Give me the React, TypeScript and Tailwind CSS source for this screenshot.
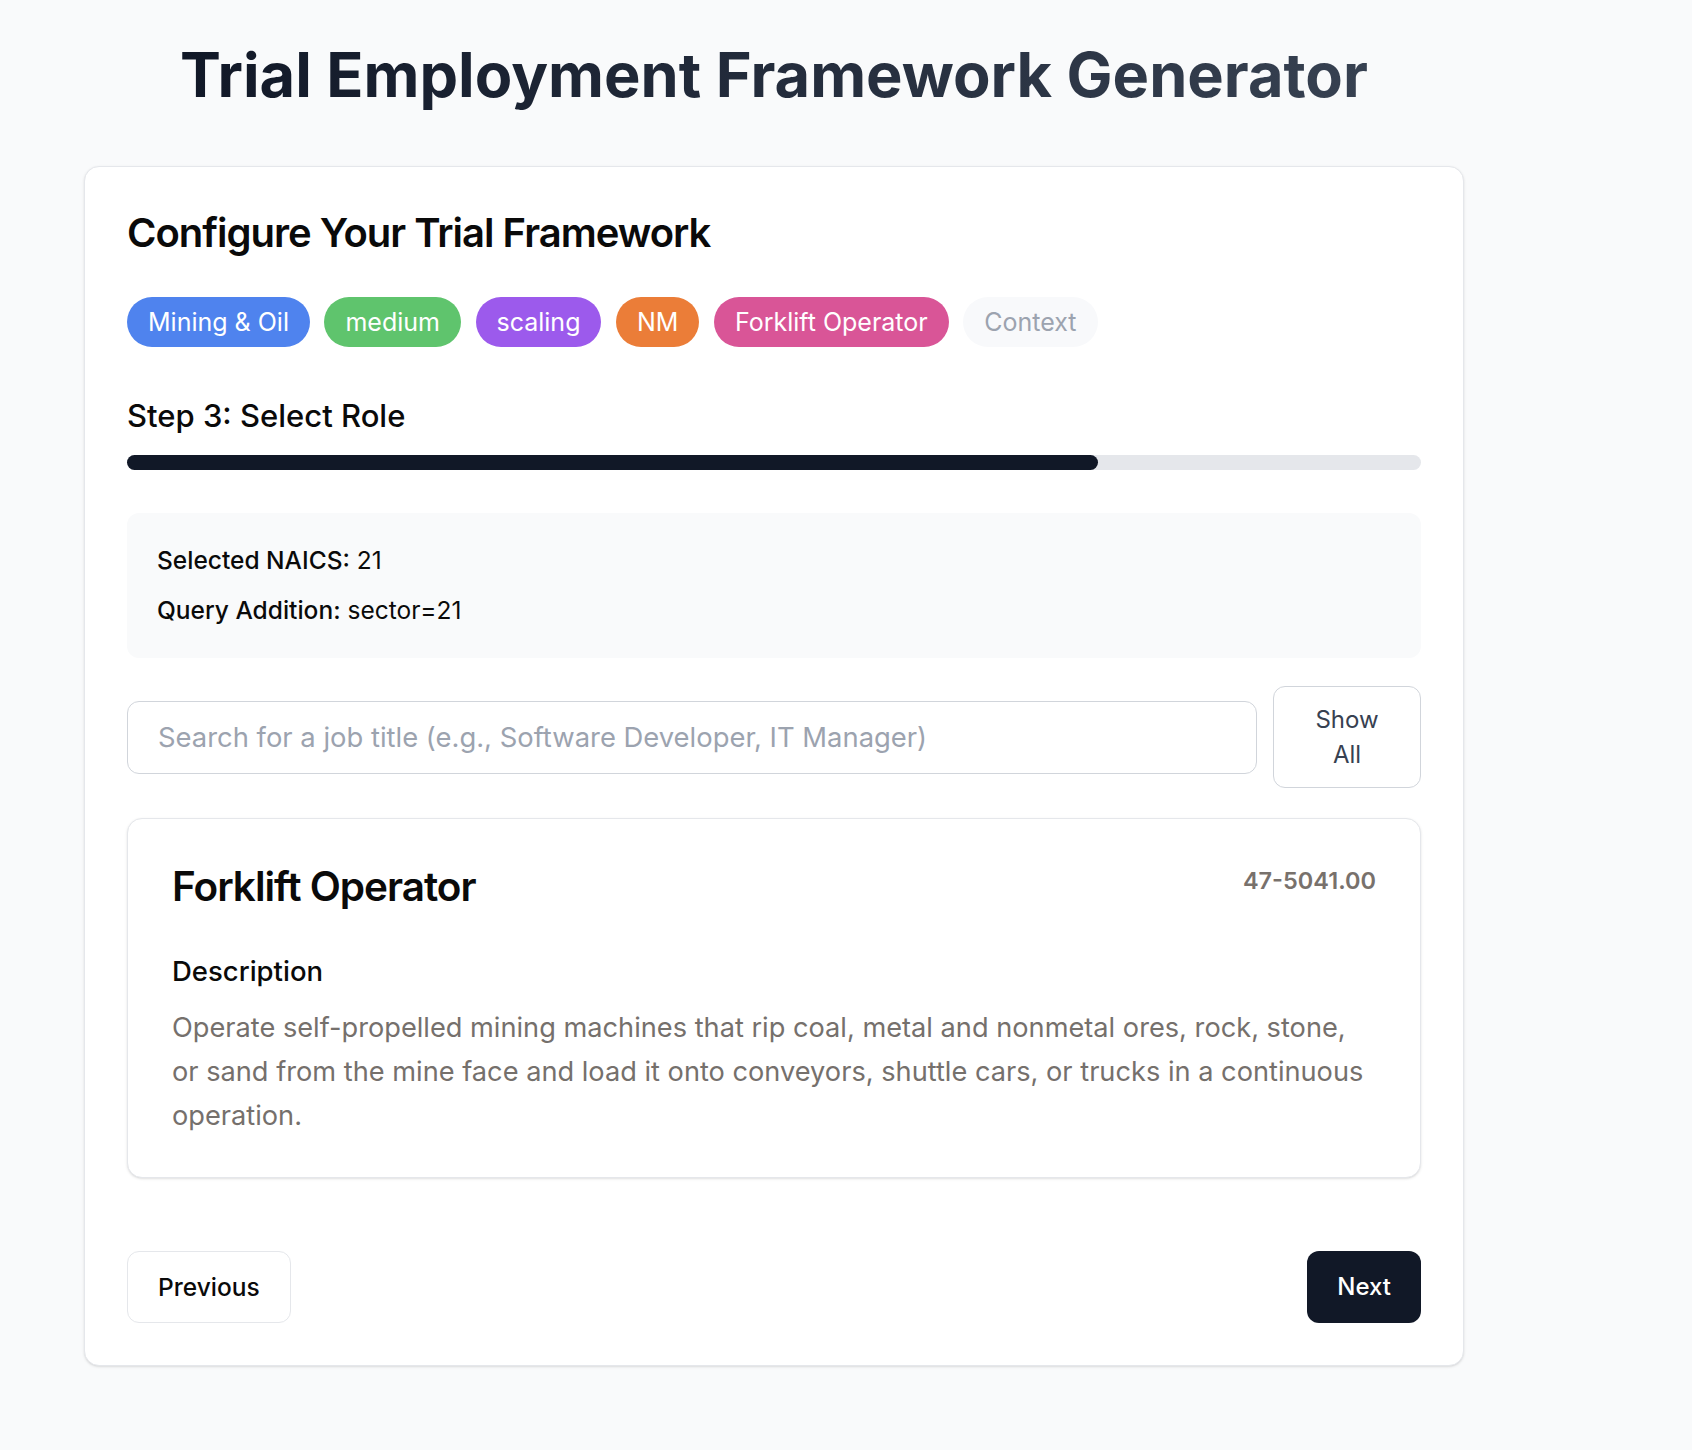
import React from "react";

const CHIPS = [
  { label: "Mining & Oil", cls: "bg-[#4f83ee] text-white" },
  { label: "medium", cls: "bg-[#5fc46d] text-white" },
  { label: "scaling", cls: "bg-[#9c5aec] text-white" },
  { label: "NM", cls: "bg-[#eb7d38] text-white" },
  { label: "Forklift Operator", cls: "bg-[#d95597] text-white" },
  { label: "Context", cls: "bg-[#f8f9fb] text-[#9ca3af]" },
];

export default function App() {
  return (
    <div className="min-h-screen bg-[#f9fafb] font-[Inter,sans-serif] text-[#0a0a0a]">
      <div className="ml-[84px] w-[1380px] pt-[39px] pb-[84px]">
        <h1 className="text-center text-[61.3px] font-bold leading-[72px]">
          <span className="bg-linear-to-r from-[#111827] to-[#374151] bg-clip-text text-transparent">
            Trial Employment Framework Generator
          </span>
        </h1>

        <div className="mt-[55px] rounded-[15px] border border-[#e5e7eb] bg-white p-[42px] shadow-sm">
          <h2 className="text-[40px] font-semibold leading-[48px] tracking-tight">
            Configure Your Trial Framework
          </h2>

          <div className="mt-[40px] flex gap-[14.5px]">
            {CHIPS.map((c) => (
              <span
                key={c.label}
                className={`h-[50px] rounded-full px-[21px] text-[25px] leading-[50px] ${c.cls}`}
              >
                {c.label}
              </span>
            ))}
          </div>

          <p className="mt-[51px] text-[31px] font-medium leading-[36px]">
            Step 3: Select Role
          </p>
          <div className="mt-[21px] h-[15px] w-full rounded-full bg-[#e5e7eb]">
            <div className="h-full w-[75%] rounded-full bg-[#111827]" />
          </div>

          <div className="mt-[43px] space-y-[15px] rounded-[12px] bg-[#f9fafb] p-[30px] text-[24.5px] leading-[35px]">
            <p>
              <span className="font-medium">Selected NAICS:</span> 21
            </p>
            <p>
              <span className="font-medium">Query Addition:</span> sector=21
            </p>
          </div>

          <div className="mt-[28px] flex items-center gap-[16px]">
            <input
              type="text"
              placeholder="Search for a job title (e.g., Software Developer, IT Manager)"
              className="h-[73px] min-w-0 flex-1 rounded-[12px] border border-[#d1d5db] bg-white px-[30px] text-[27.4px] outline-none placeholder:text-[#9ca3af]"
            />
            <button className="w-[148px] rounded-[12px] border border-[#d1d5db] bg-white px-[38px] py-[15px] text-[24px] leading-[35px] text-[#374151]">
              Show All
            </button>
          </div>

          <div className="mt-[30px] rounded-[15px] border border-[#e5e7eb] bg-white px-[44px] pt-[44px] pb-[40px] shadow-sm">
            <div className="flex items-start justify-between">
              <h3 className="text-[40.5px] font-semibold leading-[48px] tracking-tight">
                Forklift Operator
              </h3>
              <span className="text-[23.5px] font-semibold leading-[35px] text-[#78716c]">
                47-5041.00
              </span>
            </div>
            <h4 className="mt-[43px] text-[27.5px] font-medium leading-[35px]">Description</h4>
            <p className="mt-[17px] text-[27.2px] leading-[43.75px] text-[#75706c]">
              Operate self-propelled mining machines that rip coal, metal and nonmetal ores, rock,
              stone, or sand from the mine face and load it onto conveyors, shuttle cars, or trucks
              in a continuous operation.
            </p>
          </div>

          <div className="mt-[73px] flex justify-between">
            <button className="h-[72px] rounded-[12px] border border-[#e5e7eb] bg-white px-[30px] text-[24.5px] font-medium">
              Previous
            </button>
            <button className="h-[72px] rounded-[12px] bg-[#111827] px-[30px] text-[24px] font-medium text-white">
              Next
            </button>
          </div>
        </div>
      </div>
    </div>
  );
}
